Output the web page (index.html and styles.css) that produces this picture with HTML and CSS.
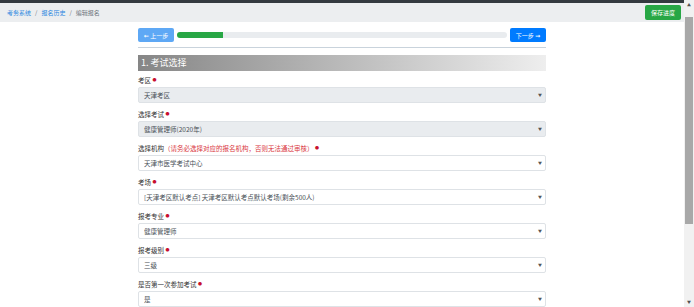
FILE: index.html
```html
<!DOCTYPE html>
<html lang="zh">
<head>
    <meta charset="UTF-8">
    <title>编辑报名</title>
    <link rel="stylesheet" href="styles.css">
</head>
<body>
    <div class="page">
        <div class="topbar"></div>
        <div class="crumbbar">
            <div class="breadcrumb">
                <a href="#">考务系统</a>
                <span class="sep">/</span>
                <a href="#">报名历史</a>
                <span class="sep">/</span>
                <span class="current">编辑报名</span>
            </div>
            <button class="btn btn-save">保存进度</button>
        </div>

        <div class="container">
            <div class="stepper">
                <button class="btn btn-prev"><span class="arrow">&#8592;</span> 上一步</button>
                <div class="progress"><div class="progress-bar" style="width: 14%"></div></div>
                <button class="btn btn-next">下一步 <span class="arrow">&#8594;</span></button>
            </div>
            <hr class="divider">

            <div class="section-title">1. 考试选择</div>

            <div class="form-group">
                <label>考区 <span class="req">&#9679;</span></label>
                <div class="select-wrap">
                    <select disabled><option>天津考区</option></select>
                </div>
            </div>

            <div class="form-group">
                <label>选择考试 <span class="req">&#9679;</span></label>
                <div class="select-wrap">
                    <select disabled><option>健康管理师(2020年)</option></select>
                </div>
            </div>

            <div class="form-group">
                <label>选择机构<span class="hint">（请务必选择对应的报名机构，否则无法通过审核）</span> <span class="req">&#9679;</span></label>
                <div class="select-wrap">
                    <select><option>天津市医学考试中心</option></select>
                </div>
            </div>

            <div class="form-group">
                <label>考场 <span class="req">&#9679;</span></label>
                <div class="select-wrap">
                    <select><option>[天津考区默认考点] 天津考区默认考点默认考场(剩余500人)</option></select>
                </div>
            </div>

            <div class="form-group">
                <label>报考专业 <span class="req">&#9679;</span></label>
                <div class="select-wrap">
                    <select><option>健康管理师</option></select>
                </div>
            </div>

            <div class="form-group">
                <label>报考级别 <span class="req">&#9679;</span></label>
                <div class="select-wrap">
                    <select><option>三级</option></select>
                </div>
            </div>

            <div class="form-group">
                <label>是否第一次参加考试 <span class="req">&#9679;</span></label>
                <div class="select-wrap">
                    <select><option>是</option></select>
                </div>
            </div>
        </div>
    </div>

    <!-- page scrollbar, drawn since the screenshot browser hides the real one -->
    <div class="scrollbar">
        <div class="scroll-btn">&#9650;</div>
        <div class="scroll-track"><div class="scroll-thumb"></div></div>
        <div class="scroll-btn">&#9660;</div>
    </div>
</body>
</html>
```

FILE: styles.css
```css
:root {
    --primary: #007bff;
    --success: #28a745;
    --gray-bg: #e9ecef;
    --text: #495057;
}

* {
    box-sizing: border-box;
}

body {
    display: flex;
    height: 100vh;
    margin: 0;
    overflow: hidden;
    font-family: "Noto Sans CJK SC", "Liberation Sans", sans-serif;
    font-size: 6.5px;
    color: #212529;
    background: #fff;
}

.page {
    flex: 1;
    min-width: 0;
    overflow: hidden;
}

.topbar {
    height: 3px;
    background: #343a40;
}

.crumbbar {
    display: flex;
    justify-content: space-between;
    align-items: center;
    height: 19px;
    padding: 0 3px 0 7px;
    background: #eceef0;
}

.breadcrumb {
    display: flex;
    align-items: center;
    gap: 4px;
    font-size: 6px;
}

.breadcrumb a {
    color: #2b87e0;
    text-decoration: none;
}

.breadcrumb .sep,
.breadcrumb .current {
    color: #6c757d;
}

.btn {
    border: none;
    border-radius: 2px;
    color: #fff;
    font-family: inherit;
    font-size: 6px;
    padding: 0;
    cursor: pointer;
}

.btn-save {
    width: 36px;
    height: 15px;
    background: var(--success);
}

.container {
    width: 408px;
    margin: 6px auto 0;
}

.stepper {
    display: flex;
    align-items: center;
    gap: 3px;
    height: 14px;
}

.btn-prev,
.btn-next {
    width: 36px;
    height: 14px;
}

.btn-prev {
    background: #5ea8f5;
}

.btn-next {
    background: var(--primary);
}

.arrow {
    font-family: "DejaVu Sans", sans-serif;
    font-weight: bold;
}

.progress {
    flex: 1;
    height: 6px;
    background: var(--gray-bg);
    border-radius: 3px;
    overflow: hidden;
}

.progress-bar {
    height: 100%;
    background: var(--success);
}

.divider {
    margin: 5px 0 0;
    border: 0;
    border-top: 1px solid #c9d3dc;
}

.section-title {
    height: 16px;
    margin-top: 7px;
    margin-bottom: 5px;
    padding-left: 3px;
    line-height: 16px;
    font-size: 9px;
    color: #fff;
    background: linear-gradient(to right, #868686, #eeeeee);
}

.form-group {
    margin-bottom: 7px;
}

.form-group label {
    display: block;
    height: 9px;
    line-height: 9px;
    margin-bottom: 2px;
    color: #333;
}

.req {
    color: #c8102e;
    font-size: 4px;
    vertical-align: 1px;
}

.hint {
    color: #d9363e;
}

.select-wrap {
    position: relative;
}

.select-wrap::after {
    content: "\25BC";
    position: absolute;
    right: 4px;
    top: 5px;
    font-size: 4px;
    color: #555;
    pointer-events: none;
}

.select-wrap select {
    display: block;
    width: 100%;
    height: 16px;
    padding: 0 5px;
    border: 1px solid #dee2e6;
    border-radius: 2px;
    background: #fff;
    font-family: inherit;
    font-size: 6.5px;
    color: var(--text);
    -webkit-appearance: none;
    appearance: none;
    opacity: 1;
}

.select-wrap select:disabled {
    background: var(--gray-bg);
}

.scrollbar {
    display: flex;
    flex-direction: column;
    width: 10px;
    background: #f1f1f1;
}

.scroll-btn {
    height: 10px;
    line-height: 10px;
    text-align: center;
    font-size: 4px;
    color: #505050;
}

.scroll-track {
    flex: 1;
    padding: 7px 1px 0 1px;
}

.scroll-thumb {
    height: 207px;
    background: #a8a8a8;
}
```
